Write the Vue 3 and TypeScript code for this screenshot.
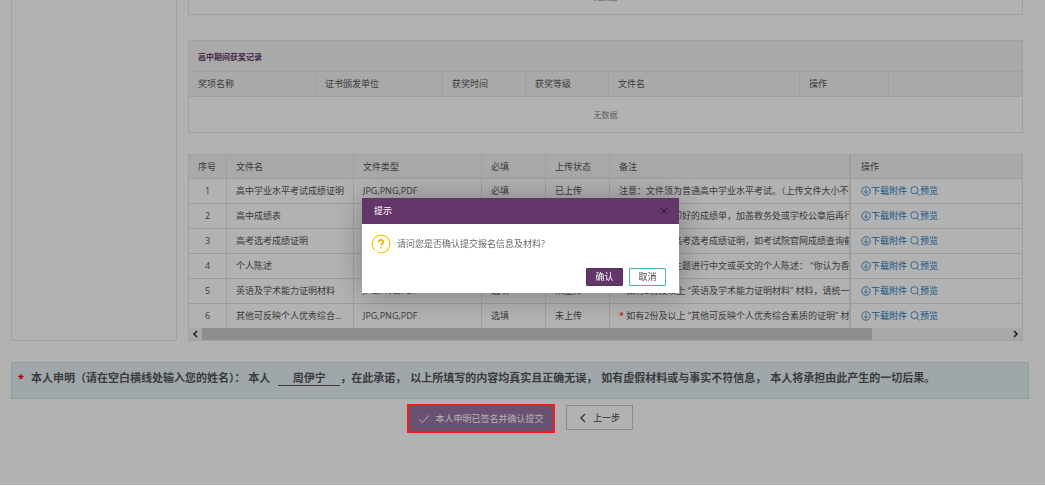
<script setup lang="ts">
interface FileRow {
  id: number
  name: string
  required: string
  status: string
  flagged: boolean
  remark: string
}

const awardColumns: string[] = ['奖项名称', '证书颁发单位', '获奖时间', '获奖等级', '文件名', '操作', '']
const fileColumns: string[] = ['序号', '文件名', '文件类型', '必填', '上传状态', '备注', '操作']

const files: FileRow[] = [
  { id: 1, name: '高中学业水平考试成绩证明', required: '必填', status: '已上传', flagged: false, remark: '注意：文件须为普通高中学业水平考试。（上传文件大小不超过5M）' },
  { id: 2, name: '高中成绩表', required: '必填', status: '已上传', flagged: false, remark: '请上传学校打印好的成绩单，加盖教务处或学校公章后再行上传' },
  { id: 3, name: '高考选考成绩证明', required: '必填', status: '已上传', flagged: false, remark: '请上传您本人高考选考成绩证明，如考试院官网成绩查询截图' },
  { id: 4, name: '个人陈述', required: '必填', status: '已上传', flagged: false, remark: '请您围绕以下主题进行中文或英文的个人陈述： “你认为香港' },
  { id: 5, name: '英语及学术能力证明材料', required: '选填', status: '未上传', flagged: true, remark: '如有2份及以上 “英语及学术能力证明材料” 材料，请统一上传' },
  { id: 6, name: '其他可反映个人优秀综合素质的证明', required: '选填', status: '未上传', flagged: true, remark: '如有2份及以上 “其他可反映个人优秀综合素质的证明” 材料' },
]

const clauses: string[] = [
  '，在此承诺，',
  '以上所填写的内容均真实且正确无误，',
  '如有虚假材料或与事实不符信息，',
  '本人将承担由此产生的一切后果。',
]
</script>

<template>
  <div class="page">
    <main class="content">
      <div class="columns">
        <aside class="side"></aside>
        <div class="main">
          <section class="box"><p class="empty">无数据</p></section>

          <section class="box awards">
            <h2 class="box-title">高中期间获奖记录</h2>
            <table class="grid">
              <colgroup>
                <col class="w127" /><col class="w127" /><col class="w83" /><col class="w83" />
                <col class="w191" /><col class="w89" /><col />
              </colgroup>
              <thead>
                <tr><th v-for="(c, i) in awardColumns" :key="i" scope="col">{{ c }}</th></tr>
              </thead>
            </table>
            <p class="empty">无数据</p>
          </section>

          <section class="box files">
            <table class="grid">
              <colgroup>
                <col class="w38" /><col class="w127" /><col class="w128" /><col class="w64" />
                <col class="w64" /><col /><col class="w172" />
              </colgroup>
              <thead>
                <tr><th v-for="c in fileColumns" :key="c" scope="col">{{ c }}</th></tr>
              </thead>
              <tbody>
                <tr v-for="f in files" :key="f.id">
                  <td class="num">{{ f.id }}</td>
                  <td class="name">{{ f.name }}</td>
                  <td>JPG,PNG,PDF</td>
                  <td>{{ f.required }}</td>
                  <td>{{ f.status }}</td>
                  <td class="remark"><span v-if="f.flagged" class="star">* </span>{{ f.remark }}</td>
                  <td>
                    <div class="ops">
                      <a href="#"><svg viewBox="0 0 10 10" class="ico"><circle cx="5" cy="5" r="4.2" /><path d="M5 2.5v4.6M3.2 5.4 5 7.2l1.8-1.8" /></svg>下载附件</a>
                      <a href="#"><svg viewBox="0 0 10 10" class="ico"><circle cx="4.4" cy="4.2" r="3.6" /><path d="M6.8 7 9.4 9.4" /></svg>预览</a>
                    </div>
                  </td>
                </tr>
              </tbody>
            </table>
            <div class="scroll">
              <svg viewBox="0 0 12 12" class="arrow"><path d="M7.5 3 4.5 6l3 3" /></svg>
              <div class="track"><div class="thumb"></div></div>
              <svg viewBox="0 0 12 12" class="arrow"><path d="M4.5 3l3 3-3 3" /></svg>
            </div>
          </section>
        </div>
      </div>

      <div class="declare">
        <span class="star">*</span>
        <label for="signer">本人申明（请在空白横线处输入您的姓名）： 本人</label>
        <input id="signer" type="text" value="周伊宁" />
        <p class="clauses"><span v-for="c in clauses" :key="c">{{ c }}</span></p>
      </div>

      <div class="actions">
        <div class="marked">
          <button type="button" class="submit"><svg viewBox="0 0 12 10" class="tick"><path d="M1 5.2 4.3 8.6 11 1.4" /></svg>本人申明已签名并确认提交</button>
          <span class="frame"></span>
        </div>
        <button type="button" class="back"><svg viewBox="0 0 8 10" class="chev"><path d="M6 1 2 5l4 4" /></svg>上一步</button>
      </div>
    </main>

    <div class="overlay">
      <div class="dialog" role="dialog" aria-labelledby="dialog-title">
        <header class="dialog-head">
          <span id="dialog-title">提示</span>
          <button type="button" class="close" aria-label="关闭"><svg viewBox="0 0 8 8"><path d="M1 1l6 6M7 1 1 7" /></svg></button>
        </header>
        <div class="dialog-body">
          <svg viewBox="0 0 20 20" class="ask">
            <path class="ring" d="M3.2 15.6A8.8 8.8 0 1 1 7 18.3" />
            <path class="ring faint" d="M3.2 15.6A8.8 8.8 0 0 0 7 18.3" />
            <path class="mark" d="M7.6 8.2C7.6 6.6 8.6 5.8 10 5.8s2.5.8 2.5 2.1c0 1.6-2.3 1.8-2.3 3.6" />
            <circle class="dot" cx="10.2" cy="13.8" r="1" />
          </svg>
          <p>请问您是否确认提交报名信息及材料?</p>
        </div>
        <footer class="dialog-foot">
          <button type="button" class="ok">确认</button>
          <button type="button" class="cancel">取消</button>
        </footer>
      </div>
    </div>
  </div>
</template>

<style>
html, body { background: #fff; overflow: hidden; }
</style>

<style scoped>
* { box-sizing: border-box; }
.page { font: 9px/16px "Open Sans", "Noto Sans CJK SC", sans-serif; color: #555; }
button, input { font: inherit; color: inherit; margin: 0; padding: 0; }
button { cursor: pointer; }
h2, p { margin: 0; }
svg { fill: none; stroke: currentColor; flex: none; }
.content { margin-top: -22px; padding: 0 16px 0 11px; }
.columns { display: flex; gap: 11px; padding-right: 6px; }
.side { width: 166px; flex: none; border: 1px solid #e6e6e6; border-width: 0 1px 1px; }
.main { flex: 1; min-width: 0; }
.box { border: 1px solid #e6e6e6; }
.awards { margin-top: 25px; }
.files { margin-top: 21px; }
.empty { font-size: 8px; line-height: 35px; text-align: center; color: #888; }
.box-title { font-size: 8px; line-height: 30px; height: 31px; padding: 1px 9px 0; color: #5f3766; background: #f2f2f2; border-bottom: 1px solid #e6e6e6; }
.grid { width: 100%; table-layout: fixed; border-collapse: separate; border-spacing: 0; }
.grid th, .grid td { height: 25px; padding: 0 9px; text-align: left; font-weight: 400; white-space: nowrap; overflow: hidden; border-right: 1px solid #e6e6e6; border-bottom: 1px solid #dde1e3; }
.grid th { background: #f2f2f2; border-bottom-color: #e6e6e6; }
.grid th:last-child, .grid td:last-child { border-right: 0; }
.files th { height: 24px; }
.files .num { text-align: center; }
.files .name { text-overflow: ellipsis; }
.files .remark { padding-right: 0; }
.files tbody tr:last-child td { height: 24px; border-bottom: 0; }
.files th:last-child, .files td:last-child { padding-left: 10px; border-left: 1px solid #e0e0e0; }
.w38 { width: 38px; } .w64 { width: 64px; } .w83 { width: 83px; } .w89 { width: 89px; }
.w127 { width: 127px; } .w128 { width: 128px; } .w172 { width: 172px; } .w191 { width: 191px; }
.star { color: #f00; }
.ops { display: flex; gap: 3px; }
.ops a { display: flex; align-items: center; color: #1c7ac0; text-decoration: none; }
.ico { width: 10px; height: 10px; stroke-width: .8; }
.scroll { display: flex; height: 12px; background: #f1f1f1; }
.arrow { width: 13px; height: 12px; color: #333; stroke-width: 1.6; }
.track { flex: 1; }
.thumb { width: 83%; height: 12px; background: #cbcbcb; }
.declare { display: flex; align-items: flex-start; margin-top: 21px; height: 37px; padding: 7px 6px; font-size: 11px; font-weight: 700; white-space: nowrap; color: #555; background: #e4eff5; border: 1px solid #cfdee8; }
.declare .star { width: 13px; }
.declare input { width: 62px; height: 16px; margin-left: 8px; text-align: center; border: 0; border-bottom: 1px solid #555; background: transparent; font-weight: 700; outline: 0; }
.clauses { display: flex; gap: 4px; }
.actions { display: flex; justify-content: center; gap: 11px; padding: 5px 0 0; }
.marked { position: relative; display: flex; padding: 2px; }
.frame { position: absolute; inset: 0; z-index: 3; border: 2px solid #ee1c1c; pointer-events: none; }
.submit, .back { display: flex; align-items: center; justify-content: center; border: 0; }
.submit { width: 144px; height: 25px; gap: 5px; color: #fff; background: #9873a2; }
.tick { width: 12px; height: 10px; }
.back { width: 67px; height: 25px; margin-top: 1px; gap: 6px; color: #444; background: #fff; border: 1px solid #c9c9c9; }
.chev { width: 8px; height: 10px; stroke-width: 1.2; }
.overlay { position: fixed; inset: 0 0 1px; z-index: 2; display: flex; align-items: center; justify-content: center; padding: 6px 4px 0 0; background: rgba(0, 0, 0, .3); }
.dialog { width: 317px; background: #fff; box-shadow: 1px 1px 30px rgba(0, 0, 0, .3); }
.dialog-head { display: flex; align-items: center; justify-content: space-between; height: 26px; padding: 0 11px 0 12px; color: #fff; background: #623668; }
.close { display: flex; border: 0; background: none; color: #2c1830; }
.close svg { width: 8px; height: 8px; }
.dialog-body { display: flex; align-items: center; gap: 6px; height: 40px; padding: 0 9px; color: #666; }
.ask { width: 20px; height: 20px; }
.ring { stroke: #f6c80e; stroke-width: 1.2; }
.faint { opacity: .35; }
.mark { stroke: #f3b90c; stroke-width: 1.8; }
.dot { fill: #f3b90c; stroke: none; }
.dialog-foot { display: flex; justify-content: flex-end; gap: 6px; padding: 4px 13px 7px; }
.ok, .cancel { width: 37px; height: 18px; line-height: 16px; border-radius: 1px; }
.ok { color: #fff; background: #623668; border: 1px solid #55305b; }
.cancel { color: #444; background: #fff; border: 1px solid #45b8a8; }
</style>
